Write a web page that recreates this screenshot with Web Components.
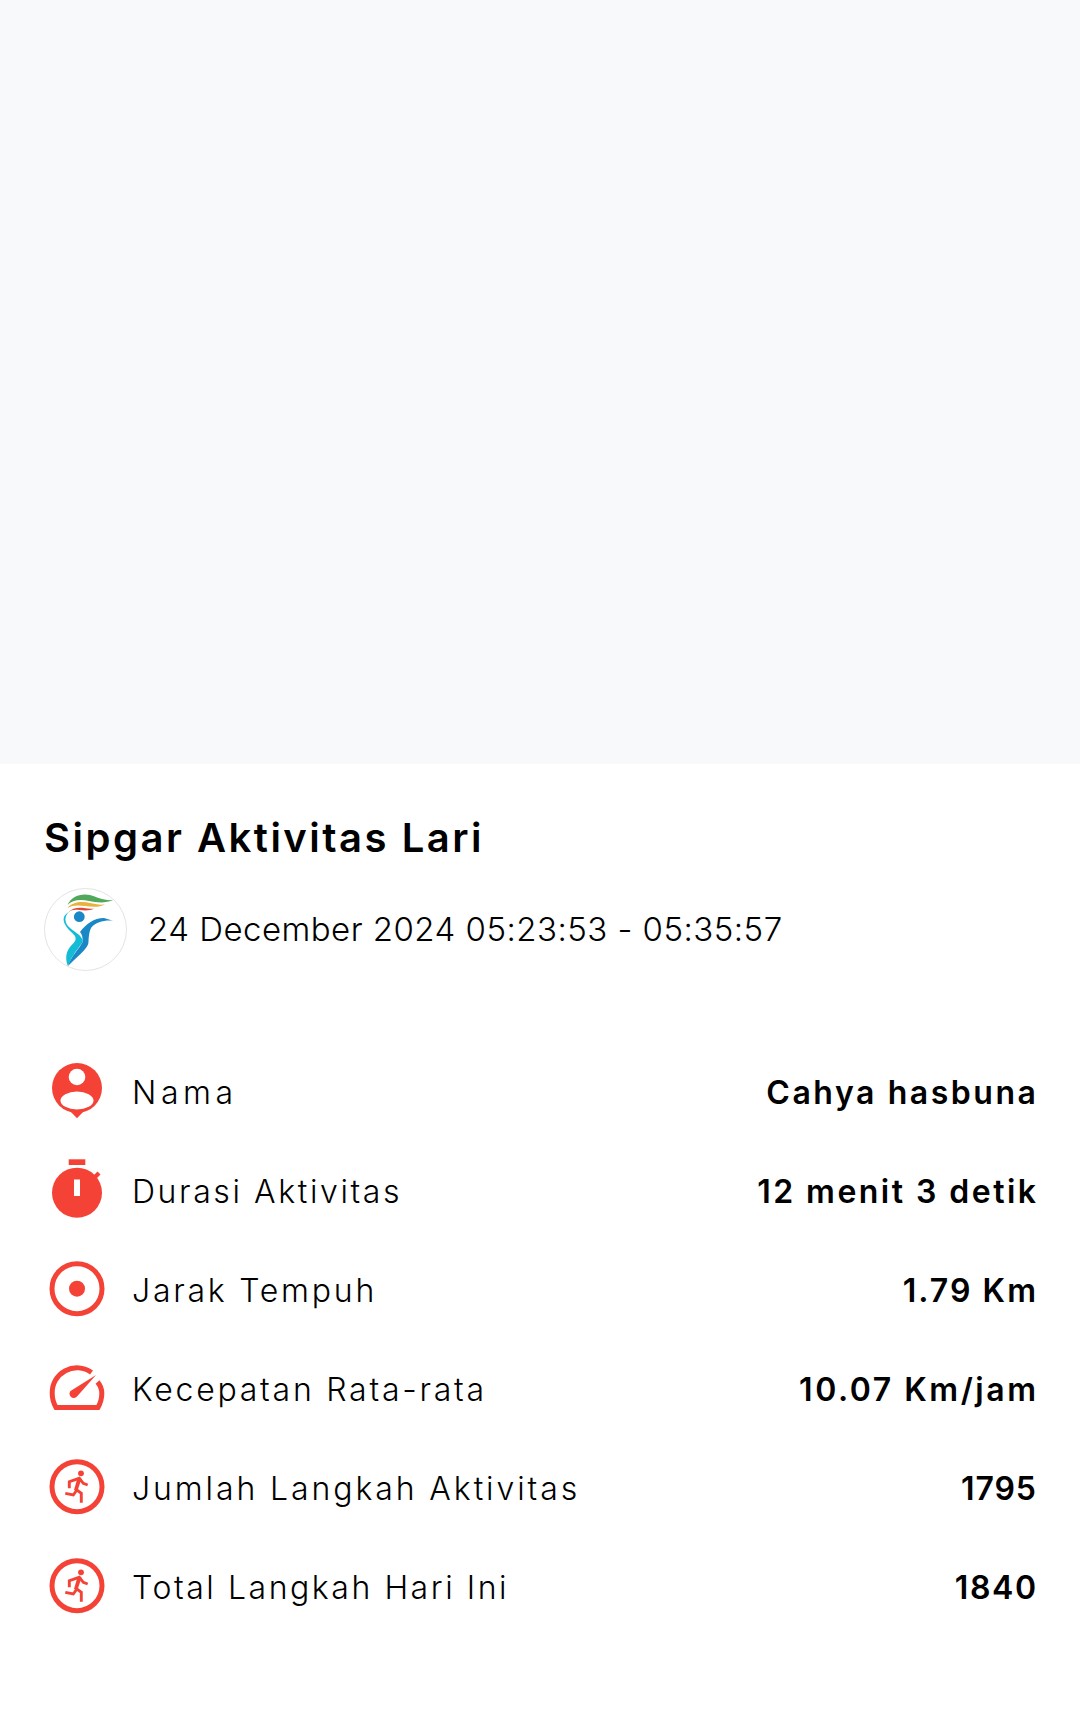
<!DOCTYPE html>
<html lang="id"><head><meta charset="utf-8"><title>Sipgar Aktivitas Lari</title>
<style>html,body{margin:0;padding:0;background:#fff}body{font-family:Inter,"Liberation Sans",sans-serif;color:#000}</style>
</head><body>
<map-hero></map-hero>
<activity-report>
  <activity-header slot="header" title-text="Sipgar Aktivitas Lari" date="24 December 2024 05:23:53 - 05:35:57"></activity-header>
  <stat-row icon="person" label="Nama" value="Cahya hasbuna" ls="4.6" vs="2.55"></stat-row>
  <stat-row icon="timer" label="Durasi Aktivitas" value="12 menit 3 detik" ls="2.6" vs="2.47"></stat-row>
  <stat-row icon="target" label="Jarak Tempuh" value="1.79 Km" ls="2.75" vs="2.05"></stat-row>
  <stat-row icon="gauge" label="Kecepatan Rata-rata" value="10.07 Km/jam" ls="2.75" vs="2.53"></stat-row>
  <stat-row icon="run" label="Jumlah Langkah Aktivitas" value="1795" ls="2.9" vs=".9"></stat-row>
  <stat-row icon="run" label="Total Langkah Hari Ini" value="1840" ls="2.55" vs="1.6"></stat-row>
</activity-report>
<script>
const ICONS={
person:`<circle cx="30" cy="26" r="25" fill="#f44336"/><path d="M22 48h16l-8 8.3z" fill="#f44336"/><circle cx="30" cy="15" r="8.3" fill="#fff"/><ellipse cx="30" cy="38.5" rx="16.5" ry="9" fill="#fff"/>`,
timer:`<rect x="21.7" y="-1.7" width="16.6" height="5.7" fill="#f44336"/><path d="M46 15l4.5-4.5 3 3-4.5 4.5z" fill="#f44336"/><circle cx="30" cy="31.7" r="25" fill="#f44336"/><rect x="27" y="18.5" width="6" height="16.5" fill="#fff"/>`,
target:`<circle cx="30" cy="28.7" r="25" fill="none" stroke="#f44336" stroke-width="5"/><circle cx="30" cy="28.7" r="8" fill="#f44336"/>`,
gauge:`<path d="M44.5 13.5A24.8 24.8 0 0 0 5.2 34.3Q5.2 42 9 48.5H51Q54.8 42 54.8 34.3Q54.8 28 50.5 23" fill="none" stroke="#f44336" stroke-width="5"/><path d="M49 16L30 37.5A4.2 4.2 0 0 1 23.5 32Z" fill="#f44336"/>`,
run:`<circle cx="30" cy="28.7" r="25" fill="none" stroke="#f44336" stroke-width="5"/><circle cx="34" cy="15.3" r="2.9" fill="#f44336"/><g fill="none" stroke="#f44336" stroke-width="2.9"><path d="M22.3 30.3V23.7L32.3 20.3L36.3 25.3L40.7 27"/><path d="M29 31.3L34.3 35.3V44.7"/><path d="M29.5 32.5L26.3 37L18.3 35.3"/></g><path d="M30.5 20L34.5 20.5L30.5 33L27 32Z" fill="#f44336"/>`
};
function def(name,cls){customElements.define(name,cls)}
def('map-hero',class extends HTMLElement{constructor(){super();this.attachShadow({mode:'open'}).innerHTML=`<style>:host{display:block;height:764px;background:#f8f9fa}</style>`}});
def('activity-report',class extends HTMLElement{constructor(){super();this.attachShadow({mode:'open'}).innerHTML=`<style>:host{display:block;padding:50px 44px 0}
.rows{display:flex;flex-direction:column;margin-top:71px}</style><slot name="header"></slot><div class="rows"><slot></slot></div>`}});
def('activity-header',class extends HTMLElement{connectedCallback(){if(this.shadowRoot)return;this.attachShadow({mode:'open'}).innerHTML=`<style>:host{display:block}
h1{margin:0 0 26px;font:600 40px/48px Inter,"Liberation Sans",sans-serif;letter-spacing:2.5px;white-space:nowrap}
.meta{display:flex;align-items:center;gap:21px}
svg{width:83px;height:83px;flex:none;display:block}
.date{font:300 33px/40px Inter,"Liberation Sans",sans-serif;letter-spacing:.47px;white-space:nowrap;padding-bottom:2px}</style>
<h1>${this.getAttribute('title-text')}</h1>
<div class="meta"><svg viewBox="0 0 83 83" role="img" aria-label="logo">
<circle cx="41.5" cy="41.5" r="41" fill="#fff" stroke="#dcdcdc" stroke-width=".8"/>
<path d="M23.5 17C27 9 36 5 46 7C53 9 60 13 69 12C60 16 52 14 45 13C36 11 28 12 23.5 17Z" fill="#52a85a"/>
<path d="M23.5 20C28 14 38 13 46 15C50 16 55 17 61 16.5C54 20 47 18.5 41 18C34 17 28 17 23.5 20Z" fill="#e9b23c"/>
<path d="M24.5 24C28 20 34 19 40 20C44 20.7 47 21 50 20.5C46 23 40 22.5 35 22C31 21.5 27 22 24.5 24Z" fill="#dd4a3a"/>
<circle cx="35.3" cy="28.7" r="5.4" fill="#1a87c6"/>
<path d="M25.5 23.5C20 28 20 35 26 40C32 45 37 47 38.5 52C39 57 30 62 24 78C24 78 19 68 26 59C30 54 33 53 31 48C29 45 25 43 22 38C18 32 19 27 25.5 23.5Z" fill="#12bcd4"/>
<path d="M36 44C42 36 50 30 60 30L69 32.7C60 32 52 34 47 40C45 44 44.5 50 44.5 54C44.5 60 36 66 24 78C27 68 36 60 38.5 54C39 50 38 46 36 44Z" fill="#1a87c6"/>
</svg><span class="date">${this.getAttribute('date')}</span></div>`}});
def('stat-row',class extends HTMLElement{connectedCallback(){if(this.shadowRoot)return;const a=n=>this.getAttribute(n);this.attachShadow({mode:'open'}).innerHTML=`<style>:host{display:flex;align-items:center;height:99px}
svg{width:60px;height:60px;flex:none;overflow:visible;margin:0 25px 0 3px;display:block}
.l{flex:1;font:300 32px/40px Inter,"Liberation Sans",sans-serif;letter-spacing:${a('ls')}px;white-space:nowrap;padding-top:2px}
.v{font:600 32px/40px Inter,"Liberation Sans",sans-serif;letter-spacing:${a('vs')}px;margin-right:-${a('vs')}px;white-space:nowrap;color:#000;padding-top:2px}</style>
<svg viewBox="0 0 60 60" aria-hidden="true">${ICONS[a('icon')]}</svg><span class="l">${a('label')}</span><span class="v">${a('value')}</span>`}});
</script>
</body></html>
